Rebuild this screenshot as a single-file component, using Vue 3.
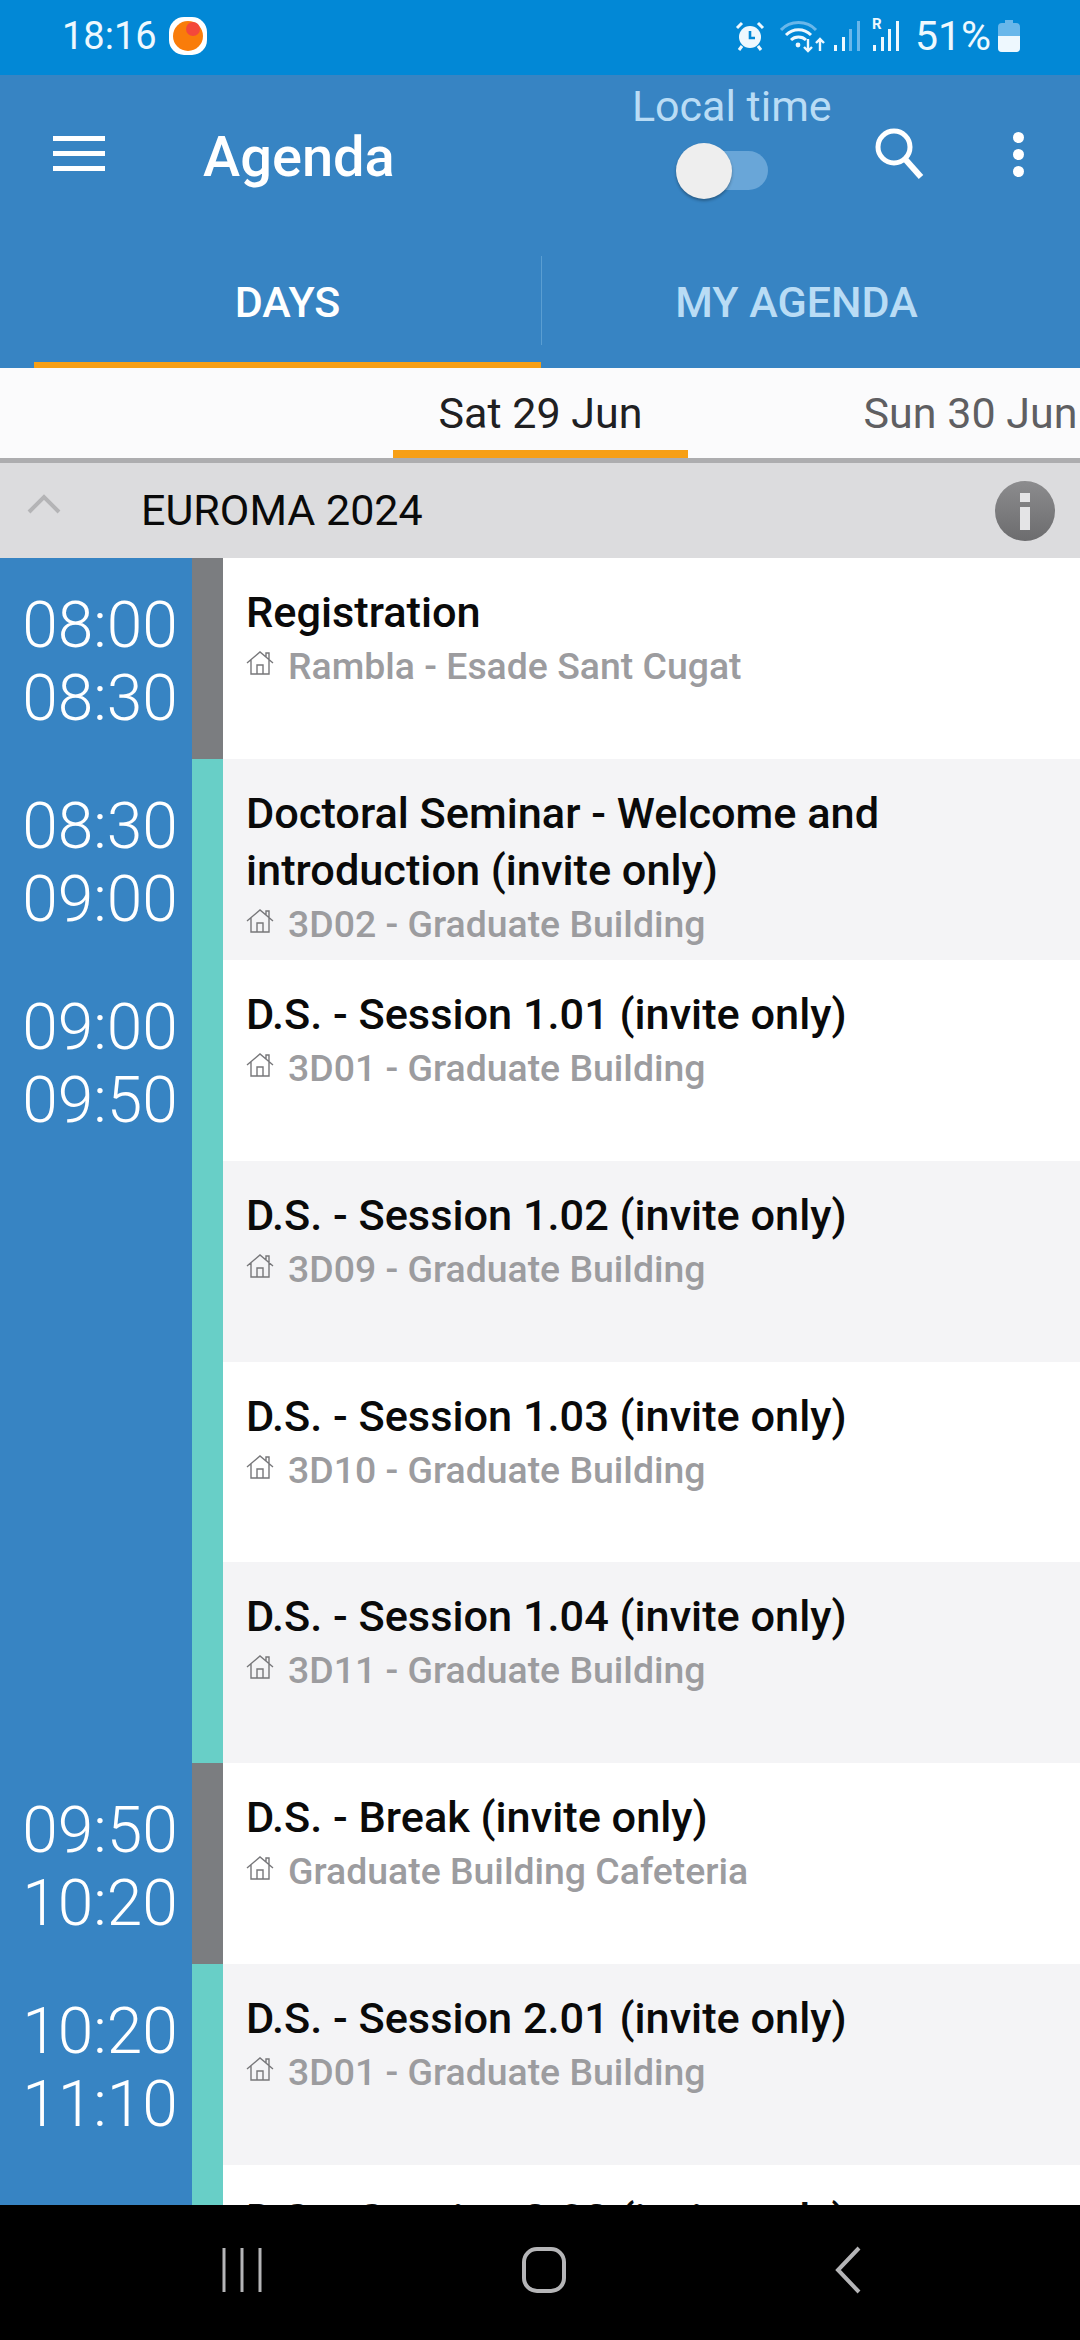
<script setup>
const rows = [
  { start: "08:00", end: "08:30", title: "Registration", place: "Rambla - Esade Sant Cugat", kind: "plain" },
  { start: "08:30", end: "09:00", title: "Doctoral Seminar - Welcome and introduction (invite only)", place: "3D02 - Graduate Building", kind: "seminar" },
  { start: "09:00", end: "09:50", title: "D.S. - Session 1.01 (invite only)", place: "3D01 - Graduate Building", kind: "seminar" },
  { title: "D.S. - Session 1.02 (invite only)", place: "3D09 - Graduate Building", kind: "seminar" },
  { title: "D.S. - Session 1.03 (invite only)", place: "3D10 - Graduate Building", kind: "seminar" },
  { title: "D.S. - Session 1.04 (invite only)", place: "3D11 - Graduate Building", kind: "seminar" },
  { start: "09:50", end: "10:20", title: "D.S. - Break (invite only)", place: "Graduate Building Cafeteria", kind: "plain" },
  { start: "10:20", end: "11:10", title: "D.S. - Session 2.01 (invite only)", place: "3D01 - Graduate Building", kind: "seminar" },
  { start: "", end: "", title: "D.S. - Session 2.02 (invite only)", place: "3D09 - Graduate Building", kind: "seminar" },
];
</script>

<template>
  <div class="screen">
    <header class="status-bar">
      <span class="clock">18:16</span>
      <svg class="app-dot" viewBox="0 0 38 38" width="38" height="38">
        <rect x="0" y="0" width="38" height="38" rx="15" fill="#fff" />
        <circle cx="19" cy="19" r="15" fill="#f97c0a" />
        <circle cx="24" cy="12" r="7" fill="#f4483a" />
      </svg>
      <span class="status-right">
        <svg class="alarm" viewBox="0 0 30 30" width="30" height="30">
          <circle cx="15" cy="16" r="11" fill="#eef8fe" />
          <path d="M15 10v7h5" fill="none" stroke="#0288d6" stroke-width="2.6" />
          <path d="M2 7l5-5M28 7l-5-5M7 25l-3 4M23 25l3 4" stroke="#eef8fe" stroke-width="3" />
        </svg>
        <svg class="wifi" viewBox="0 0 46 34" width="46" height="34">
          <path d="M1 11C10 1 27 1 36 11" fill="none" stroke="#69b7ea" stroke-width="3" />
          <path d="M6 16c7-7 18-7 25 0M11 21c4-4 11-4 15 0" fill="none" stroke="#eef8fe" stroke-width="3" />
          <circle cx="18" cy="26" r="2.4" fill="#eef8fe" />
          <path d="M28 20v12M24 28l4 4 4-4M40 32V20M36 24l4-4 4 4" fill="none" stroke="#eef8fe" stroke-width="2.4" />
        </svg>
        <svg class="signal" viewBox="0 0 28 32" width="28" height="32">
          <rect x="1" y="25" width="3" height="6" fill="#eef8fe" />
          <rect x="9" y="17" width="3" height="14" fill="#eef8fe" />
          <rect x="16" y="9" width="3" height="22" fill="#69b7ea" />
          <rect x="24" y="1" width="3" height="30" fill="#69b7ea" />
        </svg>
        <span class="roaming">
          <b>R</b>
          <svg viewBox="0 0 28 32" width="28" height="32">
            <rect x="1" y="25" width="3" height="6" fill="#eef8fe" />
            <rect x="9" y="17" width="3" height="14" fill="#eef8fe" />
            <rect x="16" y="9" width="3" height="22" fill="#eef8fe" />
            <rect x="24" y="1" width="3" height="30" fill="#eef8fe" />
          </svg>
        </span>
        <span class="battery-text">51%</span>
        <svg class="battery" viewBox="0 0 22 32" width="22" height="32">
          <path d="M7 0h8v3h3a4 4 0 0 1 4 4v21a4 4 0 0 1-4 4H4a4 4 0 0 1-4-4V7a4 4 0 0 1 4-4h3z" fill="#69b7ea" />
          <path d="M0 16h22v12a4 4 0 0 1-4 4H4a4 4 0 0 1-4-4z" fill="#eef8fe" />
        </svg>
      </span>
    </header>

    <section class="app-bar">
      <div class="toolbar">
        <div class="menu-icon"><i></i><i></i><i></i></div>
        <h1 class="title">Agenda</h1>
        <div class="local-time">
          <span>Local time</span>
          <div class="toggle"><i></i></div>
        </div>
        <svg class="search" viewBox="0 0 50 52" width="50" height="52">
          <circle cx="20" cy="20" r="16" fill="none" stroke="#fff" stroke-width="5" />
          <path d="M31 32l16 18" stroke="#fff" stroke-width="6" />
        </svg>
        <div class="dots"><i></i><i></i><i></i></div>
      </div>
      <nav class="tabs">
        <div class="tab active"><span>DAYS</span></div>
        <div class="tab other"><span>MY AGENDA</span></div>
      </nav>
    </section>

    <div class="dates">
      <div class="date current">Sat 29 Jun</div>
      <div class="date">Sun 30 Jun</div>
    </div>

    <div class="event-head">
      <svg class="chevron" viewBox="0 0 34 20" width="34" height="20">
        <path d="M2 18L17 3l15 15" fill="none" stroke="#b4b4b6" stroke-width="4" />
      </svg>
      <span class="event-name">EUROMA 2024</span>
      <svg class="info" viewBox="0 0 62 62" width="62" height="62">
        <defs>
          <linearGradient id="infoFill" x1="0" y1="0" x2="0" y2="1">
            <stop offset="0" stop-color="#8c8c8e" />
            <stop offset="1" stop-color="#6c6c6e" />
          </linearGradient>
        </defs>
        <circle cx="31" cy="31" r="30" fill="url(#infoFill)" />
        <rect x="26" y="13" width="10" height="9" fill="#e4e4e6" />
        <rect x="26" y="27" width="10" height="23" fill="#e4e4e6" />
      </svg>
    </div>

    <main class="list">
      <div v-for="(row, i) in rows" :key="i" class="row" :class="{ alt: i % 2 === 1 }">
        <div class="time">
          <span>{{ row.start }}</span>
          <span>{{ row.end }}</span>
        </div>
        <div class="bar" :class="row.kind"></div>
        <div class="info-col">
          <div class="row-title">{{ row.title }}</div>
          <div class="place">
            <svg viewBox="0 0 28 24" width="28" height="24">
              <path d="M1 12L14 1l13 11M5 9v14h18V9M11 23v-9h6v9M20 6V2h3v7" fill="none" stroke="#77777a" stroke-width="1.4" />
            </svg>
            <span>{{ row.place }}</span>
          </div>
        </div>
      </div>
    </main>

    <footer class="nav-bar">
      <svg viewBox="0 0 42 46" width="42" height="46">
        <path d="M3 1v44M21 1v44M39 1v44" stroke="#b5b5b7" stroke-width="3" fill="none" />
      </svg>
      <svg viewBox="0 0 44 46" width="44" height="46">
        <rect x="2" y="2" width="40" height="42" rx="13" stroke="#b5b5b7" stroke-width="4" fill="none" />
      </svg>
      <svg class="back" viewBox="0 0 26 48" width="26" height="48">
        <path d="M24 2L3 24l21 22" stroke="#b5b5b7" stroke-width="4" fill="none" />
      </svg>
    </footer>
  </div>
</template>

<style scoped>
.screen {
  display: flex;
  flex-direction: column;
  width: 1080px;
  height: 2340px;
  overflow: hidden;
  background: #fff;
  font-family: Roboto, "Liberation Sans", sans-serif;
}

.status-bar {
  display: flex;
  flex: none;
  align-items: center;
  height: 75px;
  padding: 0 60px 4px 62px;
  box-sizing: border-box;
  color: #eef8fe;
  background: #0288d6;
}

.clock {
  font-size: 38px;
}

.app-dot {
  margin-left: 12px;
}

.status-right {
  display: flex;
  align-items: center;
  margin-left: auto;
}

.wifi {
  margin-left: 15px;
}

.signal {
  margin-left: 7px;
}

.roaming {
  position: relative;
  display: flex;
  margin-left: 11px;
}

.roaming b {
  position: absolute;
  top: -5px;
  left: 0;
  font-size: 15px;
}

.battery-text {
  margin-left: 15px;
  font-size: 41px;
}

.battery {
  margin-left: 7px;
}

.app-bar {
  flex: none;
  height: 293px;
  color: #fff;
  background: #3784c3;
}

.toolbar {
  display: flex;
  align-items: flex-start;
  height: 181px;
}

.menu-icon {
  display: grid;
  gap: 10px;
  width: 52px;
  margin: 61px 0 0 53px;
}

.menu-icon i {
  height: 5px;
  background: #fff;
}

.title {
  margin: 47px 0 0 98px;
  font-size: 56px;
  font-weight: 500;
  line-height: 70px;
}

.local-time {
  display: flex;
  flex-direction: column;
  align-items: center;
  width: 198px;
  margin: 9px 0 0 238px;
  color: #b9dcf5;
  font-size: 43px;
  line-height: 44px;
  white-space: nowrap;
}

.toggle {
  position: relative;
  width: 67px;
  height: 39px;
  margin: 23px 0 0 5px;
  border-radius: 20px;
  background: #69a6d8;
}

.toggle i {
  position: absolute;
  top: -8px;
  left: -25px;
  width: 56px;
  height: 56px;
  border-radius: 50%;
  background: #eeeeee;
  box-shadow: 0 2px 3px rgba(0, 0, 0, 0.3);
}

.search {
  margin: 52px 0 0 43px;
}

.dots {
  display: grid;
  gap: 6px;
  margin: 57px 0 0 89px;
}

.dots i {
  width: 11px;
  height: 11px;
  border-radius: 50%;
  background: #fff;
}

.tabs {
  display: grid;
  grid-template-columns: 541px 1fr;
  height: 112px;
  font-size: 43px;
  font-weight: 500;
}

.tab {
  display: flex;
  align-items: flex-start;
  justify-content: center;
  box-sizing: border-box;
  padding-top: 21px;
}

.tab.active {
  margin-left: 34px;
  border-bottom: 6px solid #f79f15;
}

.tab.other {
  position: relative;
  padding-right: 28px;
  color: #b9dcf5;
}

.tab.other::before {
  position: absolute;
  top: 0;
  left: 0;
  width: 1px;
  height: 89px;
  background: #5a9ed2;
  content: "";
}

.dates {
  display: flex;
  flex: none;
  gap: 135px;
  height: 90px;
  padding-left: 393px;
  box-sizing: border-box;
  background: #fbfbfc;
  color: #5f5f62;
  font-size: 43px;
  white-space: nowrap;
}

.date {
  flex: none;
  width: 295px;
  padding-top: 20px;
  text-align: center;
}

.date.current {
  height: 90px;
  box-sizing: border-box;
  border-bottom: 8px solid #f79f15;
  color: #202022;
}

.event-head {
  display: flex;
  flex: none;
  align-items: center;
  height: 100px;
  box-sizing: border-box;
  border-top: 5px solid #adadaf;
  background: #dcdcde;
  color: #0a0a0a;
  font-size: 43px;
}

.chevron {
  margin-left: 27px;
  margin-top: -14px;
}

.event-name {
  margin-left: 80px;
  margin-top: -2px;
}

.info {
  margin-left: auto;
  margin-right: 24px;
}

.list {
  flex: 1;
  min-height: 0;
  overflow: hidden;
}

.row {
  display: flex;
  height: 200.9px;
  background: #fff;
}

.row.alt {
  background: #f4f4f6;
}

.time {
  display: flex;
  flex: none;
  flex-direction: column;
  align-items: center;
  box-sizing: border-box;
  width: 192px;
  padding: 31px 0 0 8px;
  color: #fff;
  background: #3784c3;
  font-size: 64px;
  font-weight: 300;
  line-height: 73px;
}

.bar {
  flex: none;
  width: 31px;
}

.bar.plain {
  background: #7b7d80;
}

.bar.seminar {
  background: #68cfc7;
}

.info-col {
  padding: 26px 40px 0 23px;
}

.row-title {
  color: #0a0a0a;
  font-size: 43.3px;
  font-weight: 500;
  line-height: 57px;
}

.place {
  display: flex;
  align-items: center;
  gap: 14px;
  height: 50px;
  color: #9c9c9f;
  font-size: 37.4px;
  font-weight: 500;
}

.place svg {
  margin-top: -6px;
}

.nav-bar {
  display: flex;
  flex: none;
  align-items: center;
  justify-content: center;
  gap: 259px;
  height: 135px;
  padding: 0 0 5px 2px;
  box-sizing: border-box;
  background: #000;
}

.back {
  margin-left: 10px;
}
</style>
